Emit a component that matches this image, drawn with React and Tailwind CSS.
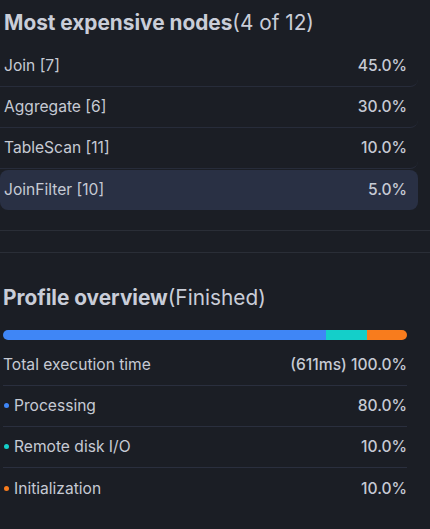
import React from 'react';

const nodes = [
  { name: 'Join [7]', pct: '45.0%' },
  { name: 'Aggregate [6]', pct: '30.0%' },
  { name: 'TableScan [11]', pct: '10.0%' },
  { name: 'JoinFilter [10]', pct: '5.0%', active: true },
];

const phases = [
  { name: 'Processing', pct: '80.0%', dot: 'bg-[#3f86f6]' },
  { name: 'Remote disk I/O', pct: '10.0%', dot: 'bg-[#14cfc9]' },
  { name: 'Initialization', pct: '10.0%', dot: 'bg-[#f87c1d]' },
];

export default function App() {
  return (
    <div className="w-[430px] min-h-[529px] bg-[#1b1e25] text-[#c6cad4] font-['Inter',sans-serif]">
      <section className="pt-2 pb-5 border-b border-[#2a2e37]">
        <h2 className="pl-1 h-[30px] flex items-center text-[20.8px] text-[#c9cdd8]">
          <span className="font-bold">Most expensive nodes</span>
          <span className="font-normal">(4 of 12)</span>
        </h2>
        <div className="w-[418px] mt-2">
          {nodes.map((n) => (
            <div
              key={n.name}
              className={
                n.active
                  ? 'h-10 mt-px flex items-center justify-between pl-1 pr-[11px] rounded-lg bg-[#293044] text-[15.6px]'
                  : 'h-[41px] flex items-center justify-between pl-1 pr-[11px] border-b border-[#272c3a] rounded-br-lg text-[15.6px]'
              }
            >
              <span>{n.name}</span>
              <span className="font-medium">{n.pct}</span>
            </div>
          ))}
        </div>
      </section>

      <section className="mt-[21px] border-t border-[#2a2e37] pt-[30px] pb-8">
        <h2 className="pl-[3px] h-[30px] flex items-center text-[20.8px] text-[#c9cdd8]">
          <span className="font-bold">Profile overview</span>
          <span className="font-normal">(Finished)</span>
        </h2>
        <div className="ml-[3px] w-[404px] mt-[17px]">
          <div className="h-[10px] flex rounded-full overflow-hidden">
            <div className="w-[80%] bg-[#3f86f6]" />
            <div className="w-[10%] bg-[#14cfc9]" />
            <div className="w-[10%] bg-[#f87c1d]" />
          </div>
          <div className="mt-[5px] h-[41px] flex items-center justify-between border-b border-[#2a2f3e] text-[15.6px]">
            <span>Total execution time</span>
            <span className="font-medium">(611ms) 100.0%</span>
          </div>
          {phases.map((p, i) => (
            <div
              key={p.name}
              className={
                i < phases.length - 1
                  ? 'h-[41px] flex items-center justify-between border-b border-[#2a2f3e] text-[15.6px]'
                  : 'h-[41px] flex items-center justify-between text-[15.6px]'
              }
            >
              <span className="flex items-center">
                <span className={`w-[5px] h-[5px] rounded-full ml-px mr-[5px] ${p.dot}`} />
                {p.name}
              </span>
              <span className="font-medium">{p.pct}</span>
            </div>
          ))}
        </div>
      </section>
    </div>
  );
}
